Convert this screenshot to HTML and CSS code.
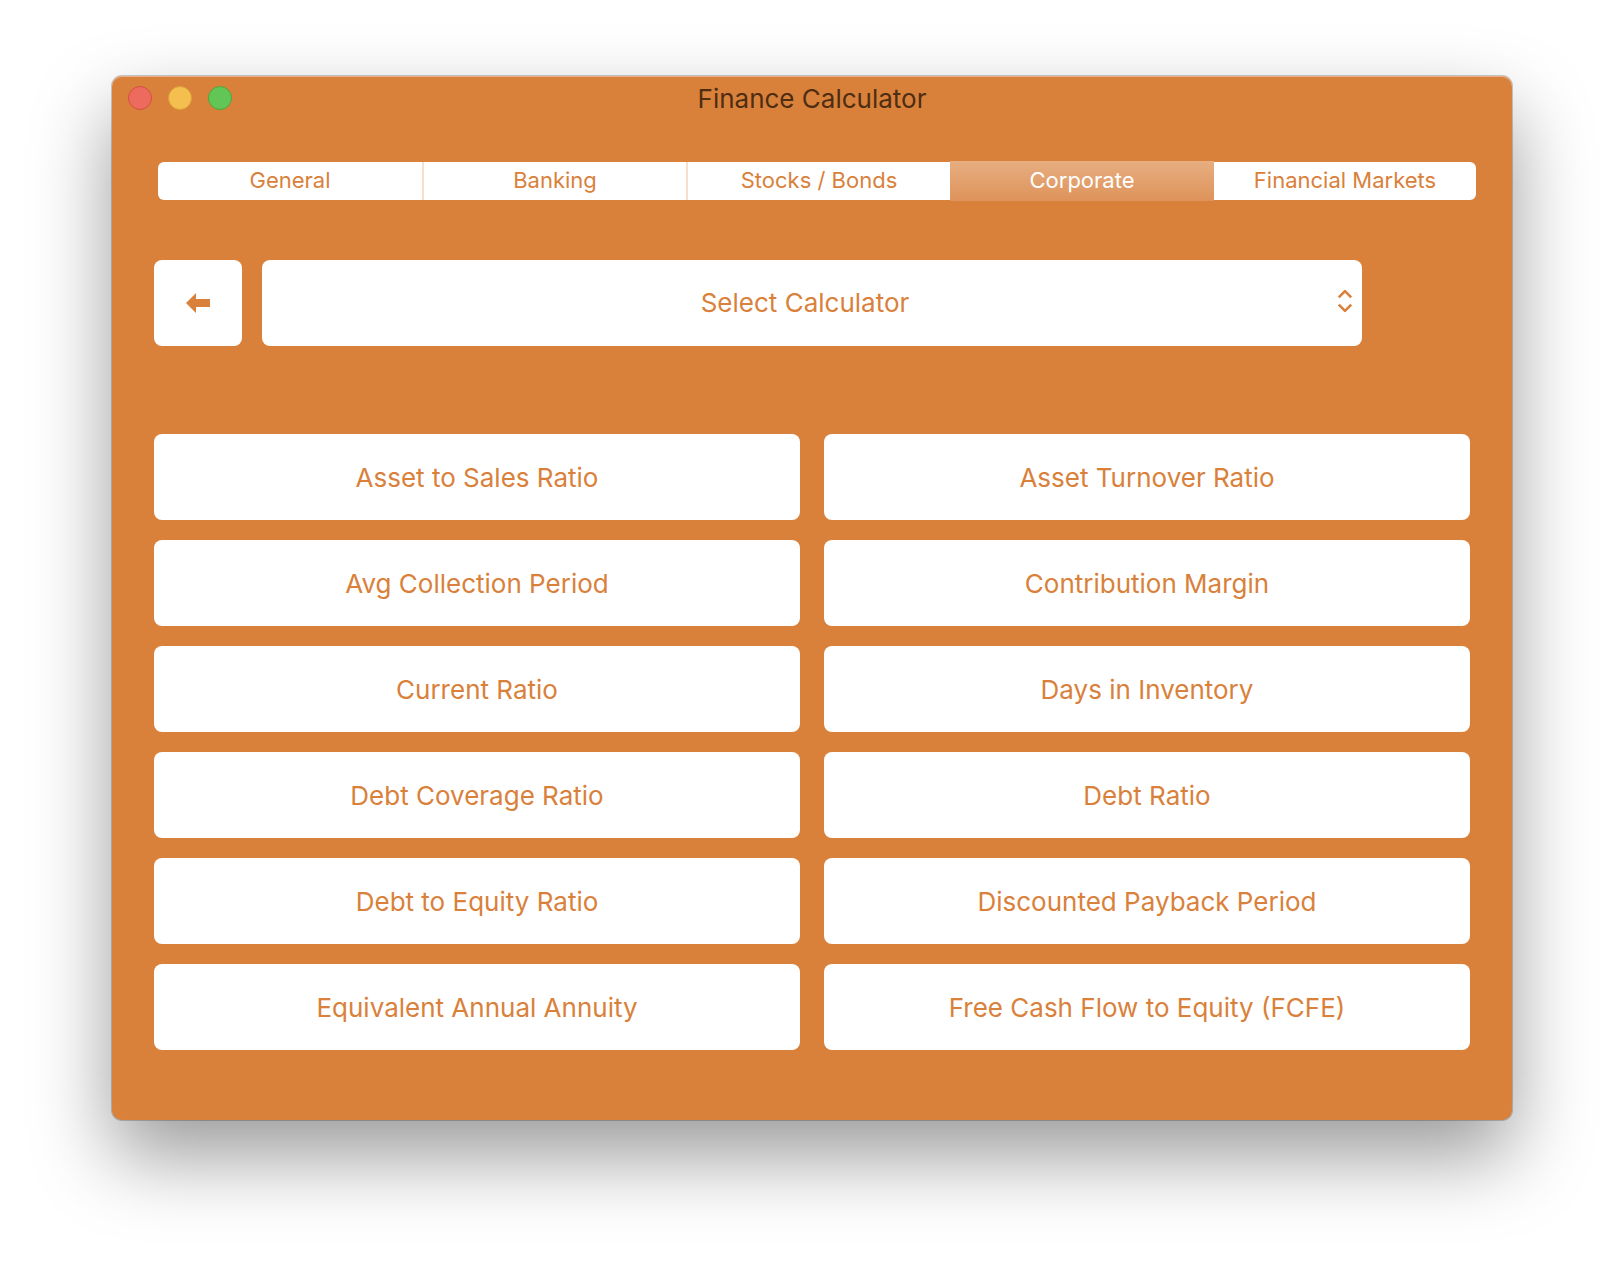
FILE: index.html
```html
<!DOCTYPE html>
<html lang="en">
<head>
<meta charset="utf-8">
<meta name="viewport" content="width=device-width, initial-scale=1">
<title>Finance Calculator</title>
<link rel="stylesheet" href="styles.css">
</head>
<body>
<main class="window">
  <header class="titlebar">
    <div class="lights">
      <button class="light close" type="button" aria-label="Close"></button>
      <button class="light minimize" type="button" aria-label="Minimize"></button>
      <button class="light expand" type="button" aria-label="Zoom"></button>
    </div>
    <h1 class="title">Finance Calculator</h1>
  </header>
  <nav class="tabs" aria-label="Categories">
    <button class="tab" type="button">General</button>
    <button class="tab" type="button">Banking</button>
    <button class="tab" type="button">Stocks / Bonds</button>
    <button class="tab active" type="button" aria-current="page">Corporate</button>
    <button class="tab" type="button">Financial Markets</button>
  </nav>
  <div class="picker-row">
    <button class="tile back" type="button" aria-label="Back">
      <svg width="24" height="20" viewBox="0 0 24 20" aria-hidden="true"><path d="M0 10 10 0v6h14v8H10v6z" fill="currentColor"/></svg>
    </button>
    <div class="picker">
      <select class="tile select" aria-label="Calculator">
        <option>Select Calculator</option>
      </select>
      <svg class="chevrons" width="16" height="24" viewBox="0 0 16 24" fill="none" stroke="currentColor" stroke-width="2.600" stroke-linejoin="round" aria-hidden="true"><path d="M1.800 8.400 8 2.200l6.200 6.200M1.800 15.600l6.200 6.200 6.200-6.200"/></svg>
    </div>
  </div>
  <section class="grid" aria-label="Corporate calculators">
    <button class="tile" type="button">Asset to Sales Ratio</button>
    <button class="tile" type="button">Asset Turnover Ratio</button>
    <button class="tile" type="button">Avg Collection Period</button>
    <button class="tile" type="button">Contribution Margin</button>
    <button class="tile" type="button">Current Ratio</button>
    <button class="tile" type="button">Days in Inventory</button>
    <button class="tile" type="button">Debt Coverage Ratio</button>
    <button class="tile" type="button">Debt Ratio</button>
    <button class="tile" type="button">Debt to Equity Ratio</button>
    <button class="tile" type="button">Discounted Payback Period</button>
    <button class="tile" type="button">Equivalent Annual Annuity</button>
    <button class="tile" type="button">Free Cash Flow to Equity (FCFE)</button>
  </section>
</main>
</body>
</html>
```

FILE: styles.css
```css
:root {
  --orange: #d9813b;
}

* {
  box-sizing: border-box;
}

body {
  margin: 0;
  padding: 76px 112px 148px;
  background: #fff;
  font-family: Inter, "Liberation Sans", sans-serif;
}

button,
select {
  margin: 0;
  padding: 0;
  border: 0;
  font: inherit;
  color: var(--orange);
}

.window {
  padding-bottom: 70px;
  border-radius: 10px;
  background: var(--orange);
  box-shadow:
    inset 0 1px 0 #e9b288,
    0 0 0 1px rgba(0, 0, 0, 0.2),
    0 36px 80px rgba(0, 0, 0, 0.4);
}

.titlebar {
  display: grid;
  grid-template-columns: 1fr auto 1fr;
  align-items: center;
  height: 44px;
  padding: 0 16px;
}

.lights {
  display: flex;
  gap: 16px;
}

.light {
  width: 24px;
  height: 24px;
  border: 1px solid;
  border-radius: 50%;
}

.close {
  background: #ed6a5f;
  border-color: #d5503f;
}

.minimize {
  background: #f5bf50;
  border-color: #d9a038;
}

.expand {
  background: #62c656;
  border-color: #50a73c;
}

.title {
  margin: 0;
  padding-top: 2px;
  font-size: 26px;
  font-weight: 400;
  line-height: 32px;
  color: #4e2d12;
}

.tabs {
  display: grid;
  grid-template-columns: repeat(4, 264fr) 262fr;
  margin: 42px 36px 0 46px;
}

.tab {
  height: 38px;
  padding-bottom: 2px;
  background: #fff;
  font-size: 22px;
  line-height: 28px;
}

.tab + .tab {
  border-left: 2px solid #f6dfcf;
}

.tab:first-child {
  border-radius: 6px 0 0 6px;
}

.tab:last-child {
  border-radius: 0 6px 6px 0;
}

.tab.active,
.tab.active + .tab {
  border-left: 0;
}

.tab.active {
  height: 40px;
  margin: -1px 0;
  background: linear-gradient(#e7ae81, #de935a);
  color: #fff;
}

.tile {
  height: 86px;
  padding-top: 2px;
  border-radius: 8px;
  background: #fff;
  font-size: 26px;
  line-height: 32px;
}

.picker-row {
  display: flex;
  gap: 20px;
  margin: 60px 150px 0 42px;
}

.back {
  display: flex;
  flex: none;
  align-items: center;
  justify-content: center;
  width: 88px;
  padding-top: 0;
}

.picker {
  position: relative;
  flex: 1;
}

.select {
  display: block;
  width: 100%;
  padding: 0 14px 0 0;
  appearance: none;
  text-align: center;
  text-align-last: center;
}

.chevrons {
  position: absolute;
  top: 29px;
  right: 9px;
  color: var(--orange);
  pointer-events: none;
}

.grid {
  display: grid;
  grid-template-columns: 1fr 1fr;
  gap: 20px 24px;
  margin: 88px 42px 0;
}
```
